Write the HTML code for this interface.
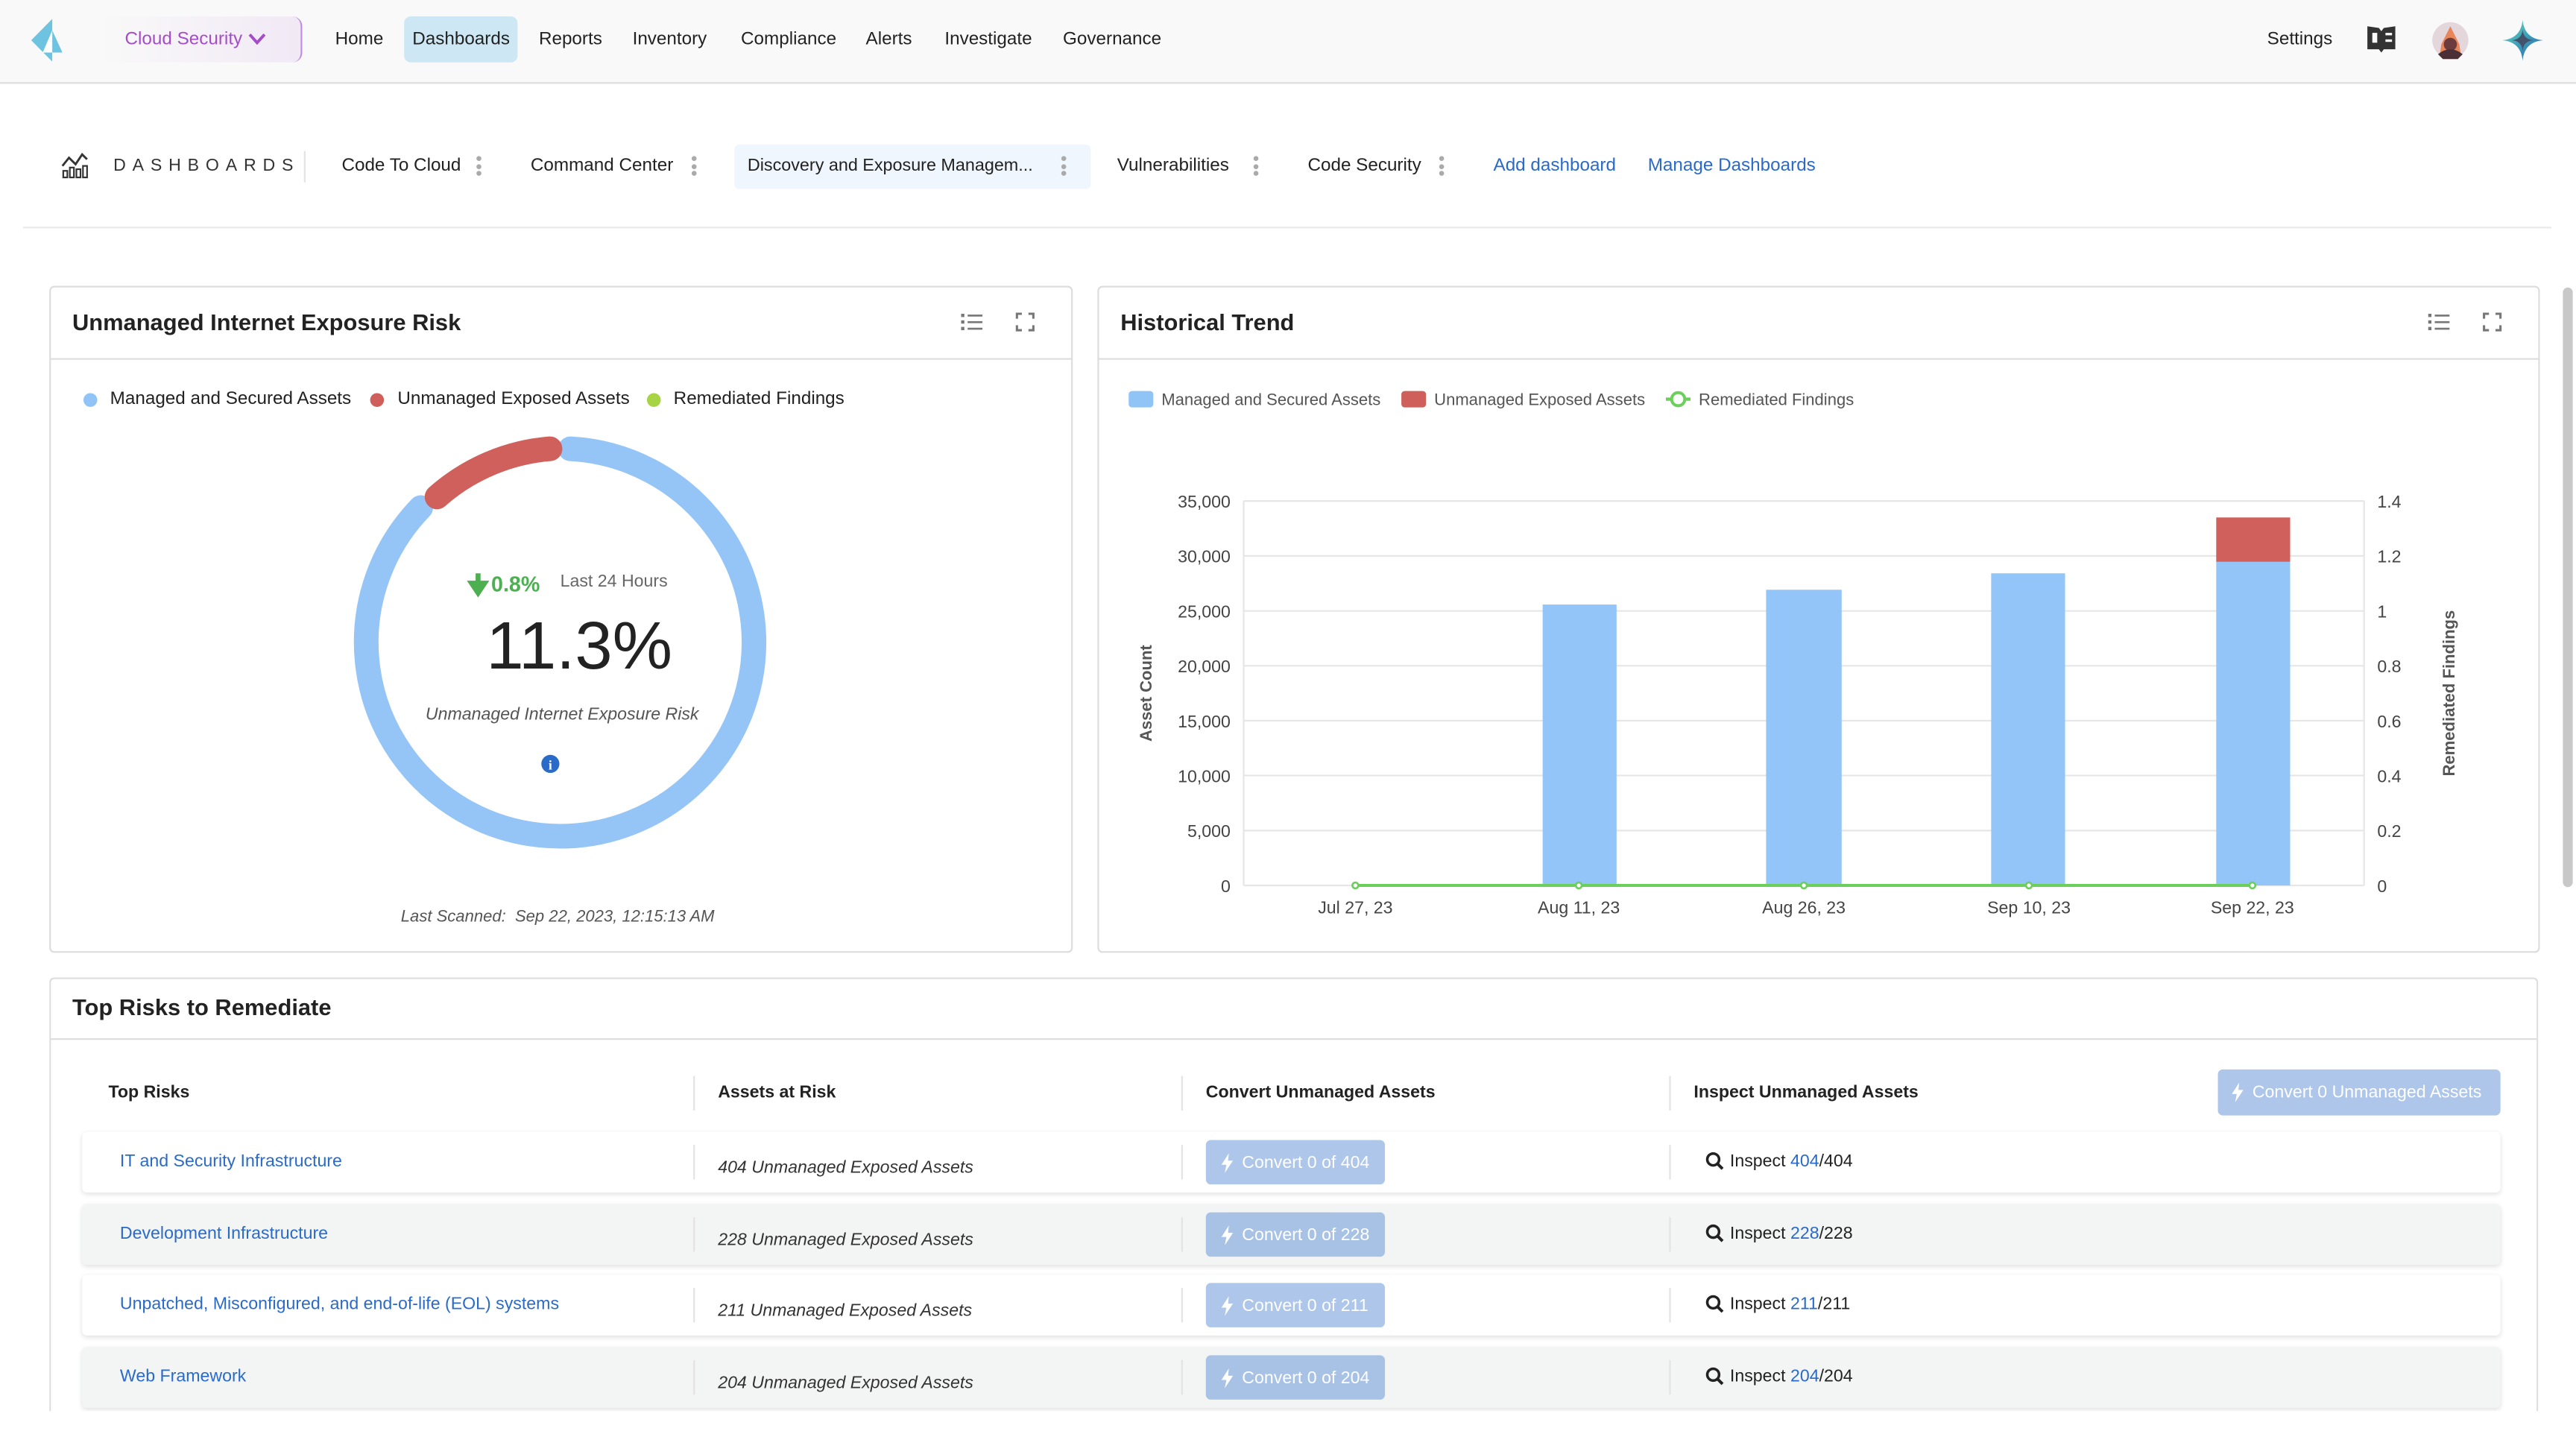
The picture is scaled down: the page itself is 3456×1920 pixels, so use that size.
<!DOCTYPE html>
<html><head><meta charset="utf-8">
<style>
html,body{margin:0;padding:0;background:#fff;overflow:hidden;width:3456px;height:1920px}
#w{position:absolute;left:0;top:0;width:1568px;height:870px;overflow:hidden;transform:scale(2.2041);transform-origin:0 0;font-family:"Liberation Sans",sans-serif;color:#222}
.t{position:absolute;white-space:nowrap;line-height:1}
.abs{position:absolute}
.nav{font-size:11px;color:#222;top:18.5px}
.tab{font-size:11px;color:#222;top:96px}
.dots{position:absolute;width:3px;top:95px}
.dots i{display:block;width:3px;height:3px;border-radius:50%;background:#aaa;margin-bottom:1.5px}
.card{position:absolute;background:#fff;border:1px solid #ddd;border-radius:3px}
.hdr{position:absolute;left:0;right:0;border-bottom:1px solid #ddd}
.ct{font-size:14px;font-weight:bold;color:#222}
.row{position:absolute;left:50px;width:1472px;height:37px;border-radius:3px;box-shadow:0 1px 3px rgba(0,0,0,.12)}
.sep{position:absolute;width:1px;background:#e3e3e3}
.lnk{color:#2a6ac9}
.btn{position:absolute;background:#aec6ea;color:#fff;border-radius:3px;font-size:10.5px}
</style></head><body><div id="w">

<div class="abs" style="left:0;top:0;width:1568px;height:50px;background:#f9f9f9;border-bottom:1.5px solid #ddd"></div>
<svg class="abs" style="left:14px;top:8px" width="34" height="34" viewBox="14 8 34 34">
<polygon points="31.8,11.5 19,24.5 31.8,37.5" fill="#6ec3e0"/>
<polygon points="31.8,18.5 38,32 31.8,32" fill="#6ec3e0"/>
<polygon points="31.8,18.5 26,32 31.8,32" fill="#fff"/>
</svg>
<div class="abs" style="left:62px;top:10px;width:121px;height:28px;border-radius:6px;border-right:1.5px solid #c38be0;background:linear-gradient(90deg,#f9f9f9,#f1e9f5)"></div>
<div class="t" style="left:76px;top:18.5px;font-size:11px;color:#a44dc6">Cloud Security</div>
<svg class="abs" style="left:151px;top:19px" width="11" height="9"><path d="M1 2 L5.5 7 L10 2" stroke="#a44dc6" stroke-width="1.8" fill="none"/></svg>
<div class="t nav" style="left:204px">Home</div>
<div class="abs" style="left:246px;top:10px;width:69px;height:28px;background:#cde8f4;border-radius:4px"></div>
<div class="t nav" style="left:251px">Dashboards</div>
<div class="t nav" style="left:328px">Reports</div>
<div class="t nav" style="left:385px">Inventory</div>
<div class="t nav" style="left:451px">Compliance</div>
<div class="t nav" style="left:527px">Alerts</div>
<div class="t nav" style="left:575px">Investigate</div>
<div class="t nav" style="left:647px">Governance</div>
<div class="t nav" style="left:1380px">Settings</div>
<svg class="abs" style="left:1440px;top:15px" width="19" height="19" viewBox="0 0 19 19"><path d="M1 1 L8 2 L9.5 4 L11 2 L18 1 L18 15 L11 15 L9.5 17 L8 15 L1 15Z" fill="#333"/><rect x="4" y="5" width="3" height="6" fill="#f9f9f9"/><rect x="12" y="5" width="4" height="1.5" fill="#f9f9f9"/><rect x="12" y="9" width="4" height="1.5" fill="#f9f9f9"/></svg>
<svg class="abs" style="left:1480px;top:13px" width="23" height="23" viewBox="0 0 23 23"><circle cx="11.5" cy="11.5" r="11" fill="#e4d7db"/><path d="M11.5 3 L6 14 L5 21 L18 21 L17 14Z" fill="#e9855a"/><circle cx="11.5" cy="14" r="4" fill="#6b3b3e"/><path d="M4 20 Q11.5 14 19 20 L16 23 L7 23Z" fill="#4a3036"/></svg>
<svg class="abs" style="left:1523px;top:12px" width="25" height="25" viewBox="0 0 25 25"><defs><linearGradient id="g" x1="0" y1="0" x2="1" y2="1"><stop offset="0" stop-color="#7fe0c0"/><stop offset=".5" stop-color="#3a9fb8"/><stop offset="1" stop-color="#2e5fb5"/></linearGradient></defs><path d="M12.5 0 Q13.5 11.5 25 12.5 Q13.5 13.5 12.5 25 Q11.5 13.5 0 12.5 Q11.5 11.5 12.5 0Z" fill="url(#g)"/><path d="M12.5 6 Q13 12 19 12.5 Q13 13 12.5 19 Q12 13 6 12.5 Q12 12 12.5 6Z" fill="#45526b"/></svg>

<svg class="abs" style="left:37px;top:93px" width="17" height="16" viewBox="0 0 17 16"><path d="M1 8 L5 3 L9 7 L13 1 L16 4" stroke="#333" stroke-width="1.3" fill="none"/><rect x="1.5" y="11" width="2.5" height="4" stroke="#333" fill="none"/><rect x="5.5" y="9" width="2.5" height="6" stroke="#333" fill="none"/><rect x="9.5" y="10" width="2.5" height="5" stroke="#333" fill="none"/><rect x="13.5" y="8" width="2.5" height="7" stroke="#333" fill="none"/></svg>
<div class="t" style="left:69px;top:96px;font-size:10.5px;letter-spacing:4px;color:#333">DASHBOARDS</div>
<div class="sep" style="left:185px;top:92px;height:19px"></div>
<div class="t tab" style="left:208px">Code To Cloud</div>
<div class="dots" style="left:290px"><i></i><i></i><i></i></div>
<div class="t tab" style="left:323px">Command Center</div>
<div class="dots" style="left:421px"><i></i><i></i><i></i></div>
<div class="abs" style="left:447px;top:88px;width:217px;height:27px;background:#eff6fd;border-radius:3px"></div>
<div class="t tab" style="left:455px;font-size:10.6px">Discovery and Exposure Managem...</div>
<div class="dots" style="left:646px"><i></i><i></i><i></i></div>
<div class="t tab" style="left:680px">Vulnerabilities</div>
<div class="dots" style="left:763px"><i></i><i></i><i></i></div>
<div class="t tab" style="left:796px">Code Security</div>
<div class="dots" style="left:876px"><i></i><i></i><i></i></div>
<div class="t tab lnk" style="left:909px">Add dashboard</div>
<div class="t tab lnk" style="left:1003px">Manage Dashboards</div>
<div class="abs" style="left:14px;top:137.5px;width:1539px;height:1px;background:#eaeaea"></div>
<div class="abs" style="left:1560px;top:175px;width:6px;height:365px;background:#c8c8c8;border-radius:3px"></div>

<div class="card" style="left:30px;top:174px;width:621px;height:404px">
 <div class="hdr" style="top:0;height:43px"></div>
</div>
<div class="t ct" style="left:44px;top:189px">Unmanaged Internet Exposure Risk</div>
<svg class="abs" style="left:585px;top:190px" width="14" height="12"><g fill="#777"><rect x="0" y="1" width="2" height="2"/><rect x="0" y="5" width="2" height="2"/><rect x="0" y="9" width="2" height="2"/><rect x="4" y="1.5" width="9" height="1.2"/><rect x="4" y="5.5" width="9" height="1.2"/><rect x="4" y="9.5" width="9" height="1.2"/></g></svg>
<svg class="abs" style="left:618px;top:190px" width="12" height="12"><path d="M1 4V1H4M8 1H11V4M11 8V11H8M4 11H1V8" stroke="#777" stroke-width="1.4" fill="none"/></svg>
<svg class="abs" style="left:0;top:0" width="1568" height="870">
 <circle cx="55" cy="243.5" r="4.2" fill="#90c4f6"/>
 <circle cx="229.5" cy="243.5" r="4.2" fill="#cf5f5b"/>
 <circle cx="398" cy="243.5" r="4.2" fill="#a6d444"/>
 <path d="M347.2 273.2 A118 118 0 1 1 256.1 309.0" stroke="#95c5f6" stroke-width="15" fill="none" stroke-linecap="round"/>
 <path d="M266 302.5 A118 118 0 0 1 334.8 273.2" stroke="#cf605c" stroke-width="15" fill="none" stroke-linecap="round"/>
 <path d="M291 349 V356 M287 355 L291 361 L295 355Z" stroke="#4caf50" stroke-width="3" fill="#4caf50"/>
 <circle cx="335" cy="465" r="5.5" fill="#2a6ac9"/>
 <text x="335" y="468.5" font-size="8" font-weight="bold" fill="#fff" text-anchor="middle" font-family="Liberation Serif">i</text>
</svg>
<div class="t" style="left:67px;top:238px;font-size:11px;color:#222">Managed and Secured Assets</div>
<div class="t" style="left:242px;top:238px;font-size:11px;color:#222">Unmanaged Exposed Assets</div>
<div class="t" style="left:410px;top:238px;font-size:11px;color:#222">Remediated Findings</div>
<div class="t" style="left:299px;top:349px;font-size:13px;font-weight:bold;color:#4caf50">0.8%</div>
<div class="t" style="left:341px;top:349px;font-size:10.5px;color:#666">Last 24 Hours</div>
<div class="t" style="left:296px;top:373px;font-size:41px;color:#222">11.3%</div>
<div class="t" style="left:259px;top:430px;font-size:10.5px;font-style:italic;color:#555">Unmanaged Internet Exposure Risk</div>
<div class="t" style="left:244px;top:554px;font-size:10px;font-style:italic;color:#555">Last Scanned:&nbsp; Sep 22, 2023, 12:15:13 AM</div>

<div class="card" style="left:668px;top:174px;width:876px;height:404px">
 <div class="hdr" style="top:0;height:43px"></div>
</div>
<div class="t ct" style="left:682px;top:189px">Historical Trend</div>
<svg class="abs" style="left:1478px;top:190px" width="14" height="12"><g fill="#777"><rect x="0" y="1" width="2" height="2"/><rect x="0" y="5" width="2" height="2"/><rect x="0" y="9" width="2" height="2"/><rect x="4" y="1.5" width="9" height="1.2"/><rect x="4" y="5.5" width="9" height="1.2"/><rect x="4" y="9.5" width="9" height="1.2"/></g></svg>
<svg class="abs" style="left:1511px;top:190px" width="12" height="12"><path d="M1 4V1H4M8 1H11V4M11 8V11H8M4 11H1V8" stroke="#777" stroke-width="1.4" fill="none"/></svg>
<svg class="abs" style="left:0;top:0" width="1568" height="870" font-family="Liberation Sans">
 <rect x="687" y="238" width="15" height="10" rx="2" fill="#90c4f6"/>
 <rect x="853" y="238" width="15" height="10" rx="2" fill="#cf5f5b"/>
 <line x1="1014" y1="243" x2="1029" y2="243" stroke="#6ccf5c" stroke-width="2"/>
 <circle cx="1021.5" cy="243" r="4" fill="#fff" stroke="#6ccf5c" stroke-width="1.8"/>
 <g font-size="10" fill="#555">
  <text x="707" y="246.5">Managed and Secured Assets</text>
  <text x="873" y="246.5">Unmanaged Exposed Assets</text>
  <text x="1034" y="246.5">Remediated Findings</text>
 </g>
 <g stroke="#e6e6e6" stroke-width="1">
  <line x1="757" y1="305" x2="1439" y2="305"/><line x1="757" y1="338.4" x2="1439" y2="338.4"/>
  <line x1="757" y1="371.9" x2="1439" y2="371.9"/><line x1="757" y1="405.3" x2="1439" y2="405.3"/>
  <line x1="757" y1="438.7" x2="1439" y2="438.7"/><line x1="757" y1="472.1" x2="1439" y2="472.1"/>
  <line x1="757" y1="505.6" x2="1439" y2="505.6"/><line x1="757" y1="539" x2="1439" y2="539"/>
  <line x1="757" y1="305" x2="757" y2="539"/><line x1="1439" y1="305" x2="1439" y2="539"/>
 </g>
 <g font-size="10.5" fill="#444" text-anchor="end">
  <text x="749" y="309">35,000</text><text x="749" y="342.4">30,000</text><text x="749" y="375.9">25,000</text>
  <text x="749" y="409.3">20,000</text><text x="749" y="442.7">15,000</text><text x="749" y="476.1">10,000</text>
  <text x="749" y="509.6">5,000</text><text x="749" y="543">0</text>
 </g>
 <g font-size="10.5" fill="#444">
  <text x="1447" y="309">1.4</text><text x="1447" y="342.4">1.2</text><text x="1447" y="375.9">1</text>
  <text x="1447" y="409.3">0.8</text><text x="1447" y="442.7">0.6</text><text x="1447" y="476.1">0.4</text>
  <text x="1447" y="509.6">0.2</text><text x="1447" y="543">0</text>
 </g>
 <g font-size="10.5" fill="#444" text-anchor="middle">
  <text x="825" y="556">Jul 27, 23</text><text x="961" y="556">Aug 11, 23</text><text x="1098" y="556">Aug 26, 23</text>
  <text x="1235" y="556">Sep 10, 23</text><text x="1371" y="556">Sep 22, 23</text>
 </g>
 <text transform="translate(701,422) rotate(-90)" font-size="10" font-weight="bold" fill="#555" text-anchor="middle">Asset Count</text>
 <text transform="translate(1494,422) rotate(-90)" font-size="10" font-weight="bold" fill="#555" text-anchor="middle">Remediated Findings</text>
 <rect x="939" y="368" width="45" height="171" fill="#94c5f8"/>
 <rect x="1075" y="359" width="46" height="180" fill="#94c5f8"/>
 <rect x="1212" y="349" width="45" height="190" fill="#94c5f8"/>
 <rect x="1349" y="342" width="45" height="197" fill="#94c5f8"/>
 <rect x="1349" y="315" width="45" height="27" fill="#cf605c"/>
 <line x1="825" y1="539" x2="1371" y2="539" stroke="#6ccf5c" stroke-width="1.8"/>
 <g fill="#fff" stroke="#6ccf5c" stroke-width="1.2">
  <circle cx="825" cy="539" r="1.8"/><circle cx="961" cy="539" r="1.8"/><circle cx="1098" cy="539" r="1.8"/><circle cx="1235" cy="539" r="1.8"/><circle cx="1371" cy="539" r="1.8"/>
 </g>
</svg>

<div class="card" style="left:30px;top:595px;width:1513px;height:270px;border-bottom:none;border-radius:3px 3px 0 0">
 <div class="hdr" style="top:0;height:36px"></div>
</div>
<div class="t ct" style="left:44px;top:606px">Top Risks to Remediate</div>
<div class="t" style="left:66px;top:659.5px;font-size:10.5px;font-weight:bold;color:#222">Top Risks</div>
<div class="t" style="left:437px;top:659.5px;font-size:10.5px;font-weight:bold;color:#222">Assets at Risk</div>
<div class="t" style="left:734px;top:659.5px;font-size:10.5px;font-weight:bold;color:#222">Convert Unmanaged Assets</div>
<div class="t" style="left:1031px;top:659.5px;font-size:10.5px;font-weight:bold;color:#222">Inspect Unmanaged Assets</div>
<div class="sep" style="left:422px;top:655px;height:21px"></div>
<div class="sep" style="left:719px;top:655px;height:21px"></div>
<div class="sep" style="left:1016px;top:655px;height:21px"></div>
<div class="btn" style="left:1350px;top:651px;width:172px;height:28px"><span class="t" style="left:21px;top:9px">Convert 0 Unmanaged Assets</span><svg class="abs" style="left:8px;top:8px" width="8" height="12"><path d="M5 0 L0.5 7 H3.5 L2.5 12 L7.5 4.5 H4.5Z" fill="#fff"/></svg></div>

<div class="row" style="top:689px;background:#fff"></div>
<div class="row" style="top:733px;background:#f3f4f4"></div>
<div class="row" style="top:776px;background:#fff"></div>
<div class="row" style="top:820px;background:#f3f4f4"></div>

<div class="t lnk" style="left:73px;top:702px;font-size:10.5px">IT and Security Infrastructure</div>
<div class="t lnk" style="left:73px;top:746px;font-size:10.5px">Development Infrastructure</div>
<div class="t lnk" style="left:73px;top:789px;font-size:10.5px">Unpatched, Misconfigured, and end-of-life (EOL) systems</div>
<div class="t lnk" style="left:73px;top:833px;font-size:10.5px">Web Framework</div>

<div class="t" style="left:437px;top:706px;font-size:10.5px;font-style:italic;color:#333">404 Unmanaged Exposed Assets</div>
<div class="t" style="left:437px;top:750px;font-size:10.5px;font-style:italic;color:#333">228 Unmanaged Exposed Assets</div>
<div class="t" style="left:437px;top:793px;font-size:10.5px;font-style:italic;color:#333">211 Unmanaged Exposed Assets</div>
<div class="t" style="left:437px;top:837px;font-size:10.5px;font-style:italic;color:#333">204 Unmanaged Exposed Assets</div>

<div class="sep" style="left:422px;top:697px;height:21px"></div><div class="sep" style="left:719px;top:697px;height:21px"></div><div class="sep" style="left:1016px;top:697px;height:21px"></div>
<div class="sep" style="left:422px;top:741px;height:21px"></div><div class="sep" style="left:719px;top:741px;height:21px"></div><div class="sep" style="left:1016px;top:741px;height:21px"></div>
<div class="sep" style="left:422px;top:784px;height:21px"></div><div class="sep" style="left:719px;top:784px;height:21px"></div><div class="sep" style="left:1016px;top:784px;height:21px"></div>
<div class="sep" style="left:422px;top:828px;height:21px"></div><div class="sep" style="left:719px;top:828px;height:21px"></div><div class="sep" style="left:1016px;top:828px;height:21px"></div>

<div class="btn" style="left:734px;top:694px;width:109px;height:27px"><span class="t" style="left:22px;top:8.5px">Convert 0 of 404</span><svg class="abs" style="left:9px;top:8px" width="8" height="12"><path d="M5 0 L0.5 7 H3.5 L2.5 12 L7.5 4.5 H4.5Z" fill="#fff"/></svg></div>
<div class="btn" style="left:734px;top:738px;width:109px;height:27px;background:#a8c2e6"><span class="t" style="left:22px;top:8.5px">Convert 0 of 228</span><svg class="abs" style="left:9px;top:8px" width="8" height="12"><path d="M5 0 L0.5 7 H3.5 L2.5 12 L7.5 4.5 H4.5Z" fill="#fff"/></svg></div>
<div class="btn" style="left:734px;top:781px;width:109px;height:27px"><span class="t" style="left:22px;top:8.5px">Convert 0 of 211</span><svg class="abs" style="left:9px;top:8px" width="8" height="12"><path d="M5 0 L0.5 7 H3.5 L2.5 12 L7.5 4.5 H4.5Z" fill="#fff"/></svg></div>
<div class="btn" style="left:734px;top:825px;width:109px;height:27px;background:#a8c2e6"><span class="t" style="left:22px;top:8.5px">Convert 0 of 204</span><svg class="abs" style="left:9px;top:8px" width="8" height="12"><path d="M5 0 L0.5 7 H3.5 L2.5 12 L7.5 4.5 H4.5Z" fill="#fff"/></svg></div>

<svg class="abs" style="left:1038px;top:701px" width="12" height="12"><circle cx="4.8" cy="4.8" r="3.6" stroke="#222" stroke-width="1.6" fill="none"/><path d="M7.5 7.5 L10.5 10.5" stroke="#222" stroke-width="1.8"/></svg>
<svg class="abs" style="left:1038px;top:745px" width="12" height="12"><circle cx="4.8" cy="4.8" r="3.6" stroke="#222" stroke-width="1.6" fill="none"/><path d="M7.5 7.5 L10.5 10.5" stroke="#222" stroke-width="1.8"/></svg>
<svg class="abs" style="left:1038px;top:788px" width="12" height="12"><circle cx="4.8" cy="4.8" r="3.6" stroke="#222" stroke-width="1.6" fill="none"/><path d="M7.5 7.5 L10.5 10.5" stroke="#222" stroke-width="1.8"/></svg>
<svg class="abs" style="left:1038px;top:832px" width="12" height="12"><circle cx="4.8" cy="4.8" r="3.6" stroke="#222" stroke-width="1.6" fill="none"/><path d="M7.5 7.5 L10.5 10.5" stroke="#222" stroke-width="1.8"/></svg>
<div class="t" style="left:1053px;top:702px;font-size:10.5px;color:#222">Inspect <span class="lnk">404</span>/404</div>
<div class="t" style="left:1053px;top:746px;font-size:10.5px;color:#222">Inspect <span class="lnk">228</span>/228</div>
<div class="t" style="left:1053px;top:789px;font-size:10.5px;color:#222">Inspect <span class="lnk">211</span>/211</div>
<div class="t" style="left:1053px;top:833px;font-size:10.5px;color:#222">Inspect <span class="lnk">204</span>/204</div>

<div class="abs" style="left:0;top:859px;width:1568px;height:11px;background:#fff"></div>
</div></body></html>
